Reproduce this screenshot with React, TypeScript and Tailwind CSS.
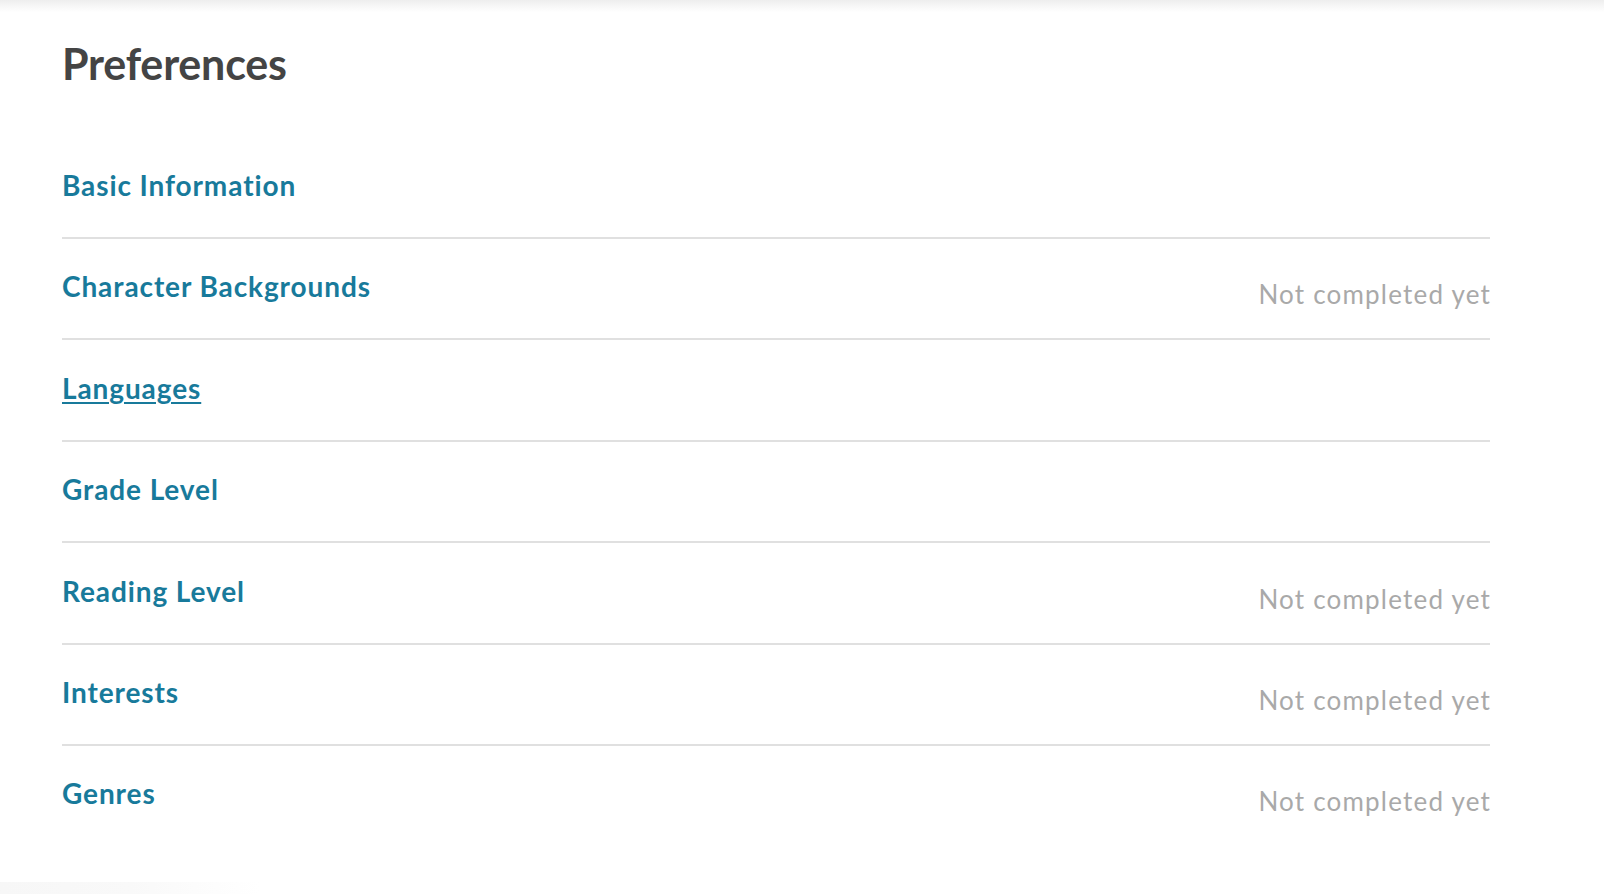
import React from "react";

const rows: { title: string; status?: string; underline?: boolean }[] = [
  { title: "Basic Information" },
  { title: "Character Backgrounds", status: "Not completed yet" },
  { title: "Languages", underline: true },
  { title: "Grade Level" },
  { title: "Reading Level", status: "Not completed yet" },
  { title: "Interests", status: "Not completed yet" },
  { title: "Genres", status: "Not completed yet" },
];

export default function App() {
  return (
    <div className="relative w-full h-[894px] bg-white overflow-hidden font-['Lato',sans-serif]">
      <div className="h-[12px] bg-gradient-to-b from-[#eeeeee] to-white" />
      <div className="pl-[62px] w-[1490px]">
        <h1 className="mt-[30px] text-[43px] leading-[43px] font-bold text-[#444444] tracking-[-0.2px]">
          Preferences
        </h1>
        <div className="mt-[52.6px] flex flex-col">
          {rows.map((r, i) => (
            <div
              key={r.title}
              className={
                "h-[101.4px] flex justify-between items-start " +
                (i < rows.length - 1 ? "border-b-2 border-[#e0e0e0]" : "")
              }
            >
              <a
                href="#"
                className={
                  "pt-[33.4px] text-[28px] leading-[28px] font-bold text-[#187a9b] tracking-[0.9px] " +
                  (r.underline ? "underline decoration-2 underline-offset-[3px]" : "no-underline")
                }
              >
                {r.title}
              </a>
              {r.status && (
                <span className="pt-[42.5px] text-[26px] leading-[26px] text-[#a9a9a9] tracking-[1.2px] -mr-[1px]">
                  {r.status}
                </span>
              )}
            </div>
          ))}
        </div>
      </div>
      <div className="absolute left-0 bottom-0 w-[260px] h-[12px] bg-gradient-to-r from-[#f7f7f7] via-[#f9f9f9] to-transparent" />
    </div>
  );
}
